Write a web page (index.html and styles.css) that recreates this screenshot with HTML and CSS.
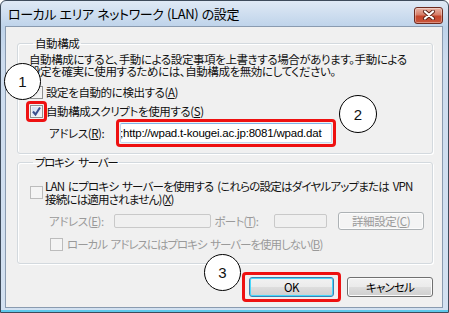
FILE: index.html
```html
<!DOCTYPE html>
<html lang="ja">
<head>
<meta charset="utf-8">
<title>ローカル エリア ネットワーク (LAN) の設定</title>
<link rel="stylesheet" href="styles.css">
</head>
<body>
<div class="window">
  <div class="titlebar">
    <span class="title">ローカル エリア ネットワーク (LAN) の設定</span>
    <span class="close"><svg width="14" height="10" viewBox="0 0 14 10"><path d="M3 1.5 L11 8.5 M11 1.5 L3 8.5" stroke="#5b2217" stroke-width="4" stroke-linecap="round"/><path d="M3 1.5 L11 8.5 M11 1.5 L3 8.5" stroke="#ffffff" stroke-width="2.2" stroke-linecap="round"/></svg></span>
  </div>
  <div class="client">
    <fieldset class="group g1">
      <legend>自動構成</legend>
      <p class="desc">自動構成にすると、手動による設定事項を上書きする場合があります。手動による<br>設定を確実に使用するためには、自動構成を無効にしてください。</p>
      <div class="cbrow r1"><span class="cb"></span><span>設定を自動的に検出する(<u>A</u>)</span></div>
      <div class="cbrow r2"><span class="hl hl-cb"><span class="cb checked"><svg width="11" height="11" viewBox="0 0 11 11"><path d="M2 5.5 L4.5 8.5 L9 1.5" fill="none" stroke="#3b4f8c" stroke-width="2"/></svg></span></span><span>自動構成スクリプトを使用する(<u>S</u>)</span></div>
      <div class="addr a1"><span class="lbl l1">アドレス(<u>R</u>):</span><span class="hl hl-input"><span class="input main">;http://wpad.t-kougei.ac.jp:8081/wpad.dat</span></span></div>
    </fieldset>
    <fieldset class="group g2">
      <legend>プロキシ サーバー</legend>
      <div class="cbrow r3"><span class="cb dis"></span><span class="two">LAN にプロキシ サーバーを使用する (これらの設定はダイヤルアップまたは VPN<br>接続には適用されません)(<u>X</u>)</span></div>
      <div class="addr a2 disabled"><span class="lbl l2">アドレス(<u>E</u>):</span><span class="input dinput w1"></span><span class="lbl l3">ポート(<u>T</u>):</span><span class="input dinput w2"></span><span class="btn dbtn">詳細設定(<u>C</u>)</span></div>
      <div class="cbrow r4 disabled"><span class="cb dis"></span><span>ローカル アドレスにはプロキシ サーバーを使用しない(<u>B</u>)</span></div>
    </fieldset>
    <div class="buttons">
      <span class="hl hl-btn"><span class="btn ok">OK</span></span>
      <span class="btn cancel">キャンセル</span>
    </div>
  </div>
  <span class="num n1">1</span>
  <span class="num n2">2</span>
  <span class="num n3">3</span>
</div>
</body>
</html>
```
FILE: styles.css
```css
html, body { margin: 0; padding: 0; }
body {
  width: 449px; height: 313px; overflow: hidden; background: #ffffff;
  font-family: "Noto Sans CJK JP", "Noto Sans", sans-serif;
  font-size: 11.5px; color: #111;
  font-feature-settings: "palt";
  letter-spacing: -0.4px;
  word-spacing: 2px;
  white-space: nowrap;
}
.window {
  position: relative;
  box-sizing: border-box;
  width: 449px; height: 313px;
  border: 1px solid #3e4b5b;
  border-radius: 6px 6px 0 0;
  background: linear-gradient(to bottom, #dfe9f5 0px, #bed3ea 26px, #cddcee 60px, #d3e1f1 100%);
  padding: 0 5px 4px 4px;
  display: flex; flex-direction: column;
  box-shadow: inset 0 -2px 0 #5ec8ea;
}
.titlebar {
  height: 25px; display: flex; align-items: center; justify-content: space-between;
  padding-left: 3px;
}
.title { font-size: 13px; letter-spacing: -0.4px; word-spacing: 1px; line-height: 16px; margin-top: 1px; color: #000; }
.close {
  width: 29px; height: 17px; box-sizing: border-box;
  border: 1px solid #6d2a1f; border-radius: 3px;
  background: linear-gradient(to bottom, #e8b4a6 0%, #d77d68 45%, #c4452b 55%, #c9563c 100%);
  display: flex; align-items: center; justify-content: center;
  margin-top: 3px; box-shadow: inset 0 0 0 1px rgba(255,255,255,0.35);
}
.client {
  flex: 1;
  border: 1px solid #8a9bb0;
  background: #f0f0f0;
  padding: 10px 9px 0 11px;
  display: flex; flex-direction: column;
}
.group {
  margin: 0; border: 1px solid #d3d9de; border-radius: 3px;
  box-shadow: inset 1px 1px 0 #fff, 1px 1px 0 #fff;
  padding: 3px 8px 10px 11px;
  min-width: 0;
}
.group legend { padding: 0 2px; margin-left: 4px; line-height: 13px; }
.g2 legend { letter-spacing: -1.3px; word-spacing: 4px; }
.g2 { margin-top: 2px; padding-top: 11px; padding-bottom: 11px; }
.desc { margin: 0; line-height: 12px; }
.cbrow { display: flex; align-items: center; gap: 3px; height: 16px; line-height: 16px; }
.r1 { margin-top: 7px; margin-left: 1px; }
.r2 { margin-top: 3px; margin-left: 1px; }
.r3 { height: auto; gap: 2px; margin-left: 1px; }
.r3 .two { line-height: 12.5px; letter-spacing: -0.8px; }
.r4 { margin-top: 6px; margin-left: 21px; gap: 4px; letter-spacing: -1px; }
.cb {
  width: 13px; height: 13px; box-sizing: border-box;
  border: 1px solid #8e8f8f;
  background: linear-gradient(135deg, #dcdcdc, #fbfbfb);
  box-shadow: inset 0 0 0 1px #f4f4f4;
  display: flex; align-items: center; justify-content: center;
  flex: none;
}
.cb.checked { background: linear-gradient(135deg, #cfdcef, #f6f9fd); }
.cb.dis { border-color: #bcbcbc; background: #f4f4f4; }
.hl {
  display: inline-flex; border: 3px solid #ee1111; border-radius: 4px;
  flex: none;
}
.hl-cb { padding: 1px; margin: -4px; }
.hl-input { padding: 1px; margin: -4px; }
.hl-btn { padding: 2px 4px; margin: -5px -7px; }
.addr { display: flex; align-items: center; }
.a1 { margin-top: 4px; height: 20px; }
.lbl.l1 { margin-left: 20px; width: 71px; }
.input {
  box-sizing: border-box; height: 20px; border: 1px solid #abadb3;
  border-top-color: #8f939b; border-radius: 2px; background: #fff;
  display: block; overflow: hidden;
}
.input.main {
  width: 212px; font-family: "Liberation Sans", sans-serif; font-size: 11.5px;
  letter-spacing: -0.2px; word-spacing: 0; line-height: 18px; padding-left: 2px;
  border-color: #7eb4ea #c3d9ef #c3d9ef #c3d9ef;
  text-indent: -3px; color: #000;
}
.disabled, .disabled u { color: #9a9a9a; }
.a2 { margin-top: 6px; height: 19px; }
.lbl.l2 { margin-left: 20px; width: 65px; }
.dinput { height: 14px; border: 1px solid #c9c9c9; background: #f0f0f0; }
.w1 { width: 97px; }
.lbl.l3 { margin-left: 4px; width: 60px; letter-spacing: -0.8px; }
.w2 { width: 53px; }
.btn {
  box-sizing: border-box; display: flex; align-items: center; justify-content: center;
  border: 1px solid #707070; border-radius: 3px;
  background: linear-gradient(to bottom, #f2f2f2 0%, #ebebeb 48%, #dddddd 52%, #cfcfcf 100%);
  box-shadow: inset 0 0 0 1px #fcfcfc;
  color: #000;
}
.dbtn {
  margin-left: 11px; width: 86px; height: 18px;
  border-color: #adb2b5; background: #f4f4f4; color: #9a9a9a;
}
.buttons { display: flex; justify-content: flex-end; gap: 13px; margin-top: 13px; }
.ok { width: 85px; height: 20px; border-color: #3c7fb1; box-shadow: inset 0 0 0 1px #48d7fb; }
.cancel { width: 86px; height: 20px; letter-spacing: -0.8px; }
.num {
  position: absolute; box-sizing: border-box;
  border: 1px solid #000; border-radius: 50%; background: #fff;
  display: flex; align-items: center; justify-content: center;
  font-family: "Liberation Sans", sans-serif; font-size: 15px; letter-spacing: 0;
}
.n1 { left: 3px; top: 62px; width: 37px; height: 37px; }
.n2 { left: 338px; top: 94px; width: 38px; height: 38px; }
.n3 { left: 203px; top: 253px; width: 37px; height: 37px; }
```
